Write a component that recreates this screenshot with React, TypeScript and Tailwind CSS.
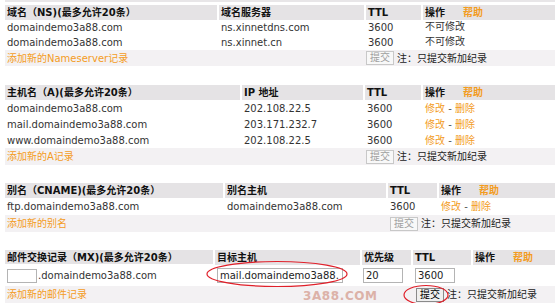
import React from "react";

const F = { fontFamily: '"DejaVu Sans", "Noto Sans CJK SC", sans-serif' };

const hdr = "bg-[#e5e3e5] flex items-center pl-[2px] font-bold text-[10px] text-[#111]";
const cell = "flex items-center pl-[2px] text-[10px] text-[#333]";
const orange = "text-[#f39c1e]";

function Help() {
  return <span className={`${orange} font-bold ml-[18px]`}>帮助</span>;
}

function Ops() {
  return (
    <span className={orange}>
      修改 <span className="text-[#555]">-</span> 删除
    </span>
  );
}

function DisabledBtn() {
  return (
    <span className="w-[28px] h-[14px] border border-[#c8c8c8] bg-[#f8f8f8] text-[#a0a0a0] text-[10px] flex items-center justify-center leading-none">
      提交
    </span>
  );
}

function Note() {
  return <span className="text-[10px] text-[#222] ml-[3px] whitespace-nowrap">注：只提交新加纪录</span>;
}

function AddRow({ label, cols, h = "h-[17px]", active = false }: { label: string; cols: string; h?: string; active?: boolean }) {
  return (
    <div className={`bg-[#f3f1f3] ${h} grid ${cols} items-center`}>
      <span className={`${orange} text-[10px] pl-[2px] whitespace-nowrap`}>{label}</span>
      <div className="flex items-center">
        {active ? (
          <span className="w-[28px] h-[14px] border border-[#8a8a8a] bg-[#efefef] text-[#000] text-[10px] flex items-center justify-center leading-none">
            提交
          </span>
        ) : (
          <DisabledBtn />
        )}
        <Note />
      </div>
    </div>
  );
}

export default function App() {
  return (
    <div className="relative w-[560px] h-[303px] bg-white overflow-hidden" style={F}>
      <div className="px-[5px]">
        <div className="h-[2px] bg-[#e8e6e8]" />

        {/* NS table */}
        <div className="mt-[3px]">
          <div className="grid grid-cols-[212px_145px_55px_132px] gap-x-[2px]">
            <div className={`${hdr} h-[15px]`}>域名（NS)(最多允许20条）</div>
            <div className={hdr}>域名服务器</div>
            <div className={hdr}>TTL</div>
            <div className={hdr}>操作<Help /></div>
            {[
              ["domaindemo3a88.com", "ns.xinnetdns.com"],
              ["domaindemo3a88.com", "ns.xinnet.cn"],
            ].map((r, i) => (
              <React.Fragment key={i}>
                <div className={`${cell} h-[15px]`}>{r[0]}</div>
                <div className={cell}>{r[1]}</div>
                <div className={cell}>3600</div>
                <div className={`${cell} -mt-[2px]`}>不可修改</div>
              </React.Fragment>
            ))}
          </div>
          <AddRow label="添加新的Nameserver记录" cols="grid-cols-[361px_1fr]" h="h-[16px]" />
        </div>

        {/* A table */}
        <div className="mt-[19px]">
          <div className="grid grid-cols-[235px_121px_56px_132px] gap-x-[2px]">
            <div className={`${hdr} h-[15px]`}>主机名（A)(最多允许20条）</div>
            <div className={hdr}>IP 地址</div>
            <div className={hdr}>TTL</div>
            <div className={hdr}>操作<Help /></div>
            {[
              ["domaindemo3a88.com", "202.108.22.5"],
              ["mail.domaindemo3a88.com", "203.171.232.7"],
              ["www.domaindemo3a88.com", "202.108.22.5"],
            ].map((r, i) => (
              <React.Fragment key={i}>
                <div className={`${cell} h-[16px]`}>{r[0]}</div>
                <div className={cell}>{r[1]}</div>
                <div className={cell}>3600</div>
                <div className={cell}><Ops /></div>
              </React.Fragment>
            ))}
          </div>
          <AddRow label="添加新的A记录" cols="grid-cols-[361px_1fr]" />
        </div>

        {/* CNAME table */}
        <div className="mt-[18px]">
          <div className="grid grid-cols-[218px_161px_49px_116px] gap-x-[2px]">
            <div className={`${hdr} h-[15px]`}>别名（CNAME)(最多允许20条）</div>
            <div className={hdr}>别名主机</div>
            <div className={hdr}>TTL</div>
            <div className={hdr}>操作<Help /></div>
            <div className={`${cell} h-[17px]`}>ftp.domaindemo3a88.com</div>
            <div className={cell}>domaindemo3a88.com</div>
            <div className={cell}>3600</div>
            <div className={cell}><Ops /></div>
          </div>
          <AddRow label="添加新的别名" cols="grid-cols-[385px_1fr]" />
        </div>

        {/* MX table */}
        <div className="mt-[18px]">
          <div className="grid grid-cols-[208px_145px_49px_58px_82px] gap-x-[2px]">
            <div className={`${hdr} h-[14px]`}>邮件交换记录（MX)(最多允许20条）</div>
            <div className={hdr}>目标主机</div>
            <div className={hdr}>优先级</div>
            <div className={hdr}>TTL</div>
            <div className={hdr}>操作<Help /></div>
            <div className={`${cell} h-[21px]`}>
              <span className="w-[30px] h-[14px] border border-[#b4b4b4] bg-white mr-px" />
              .domaindemo3a88.com
            </div>
            <div className={`${cell} pl-0`}>
              <span className="w-[126px] h-[15px] border border-[#b4b4b4] bg-white flex items-center pl-[2px] overflow-hidden whitespace-nowrap text-[#222]">
                mail.domaindemo3a88.
              </span>
            </div>
            <div className={`${cell} pl-px`}>
              <span className="w-[40px] h-[15px] border border-[#b4b4b4] bg-white flex items-center pl-[2px] text-[#222]">20</span>
            </div>
            <div className={`${cell} pl-[2px]`}>
              <span className="w-[40px] h-[15px] border border-[#b4b4b4] bg-white flex items-center pl-[2px] text-[#222]">3600</span>
            </div>
            <div className={cell} />
          </div>
          <AddRow label="添加新的邮件记录" cols="grid-cols-[411px_1fr]" active />
        </div>
      </div>

      {/* watermark */}
      <div className="absolute left-[303px] top-[287px] text-[12px] font-bold tracking-[0.6px] text-[#dcb2a8]">
        3A88.COM
      </div>

      {/* red ellipses */}
      <svg className="absolute left-0 top-0 pointer-events-none" width="560" height="303">
        <ellipse cx="277" cy="274" rx="70" ry="12.5" fill="none" stroke="#e0202a" strokeWidth="1.2" />
        <ellipse cx="426" cy="295" rx="22" ry="9.5" fill="none" stroke="#e0202a" strokeWidth="1.2" />
      </svg>
    </div>
  );
}
